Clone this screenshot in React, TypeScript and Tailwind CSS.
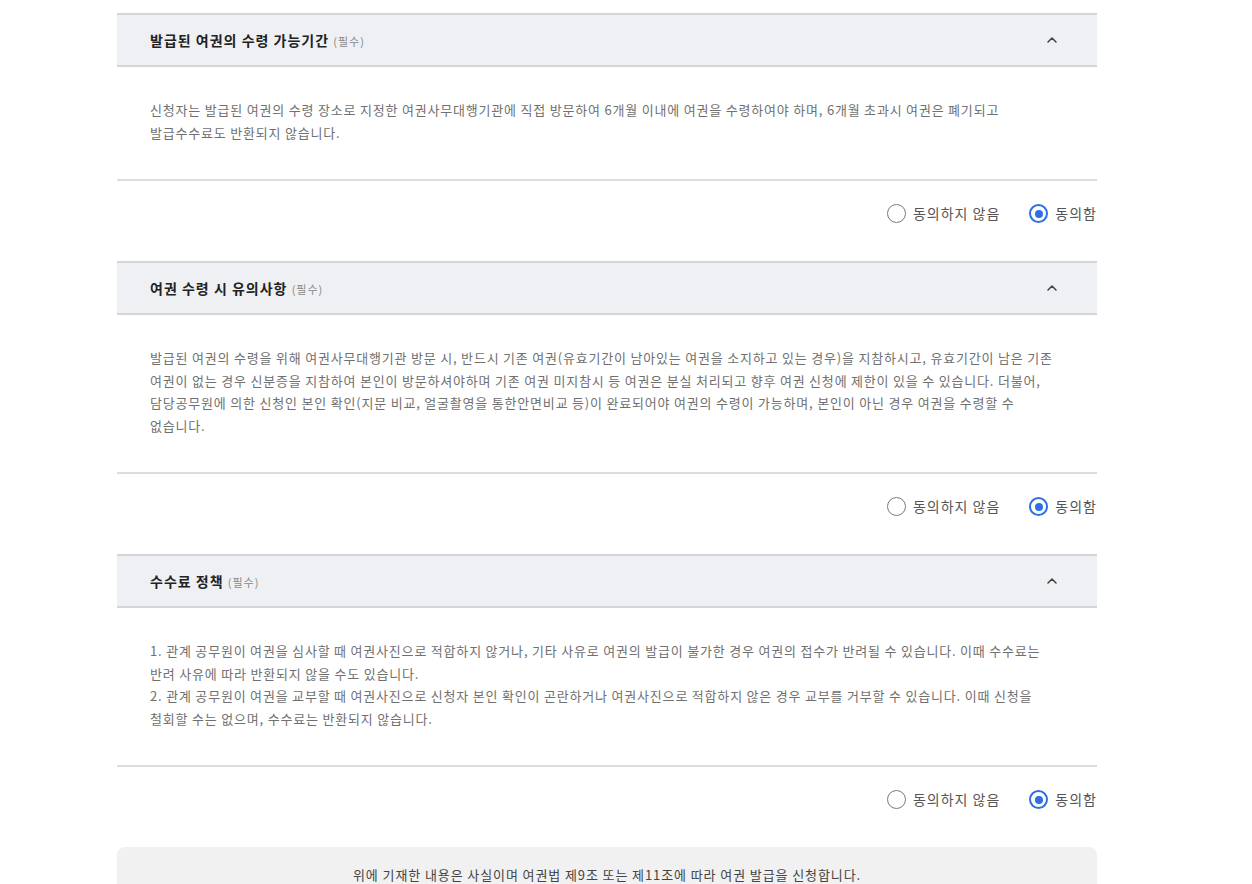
import { useState } from 'react';

const sections = [
  {
    title: '발급된 여권의 수령 가능기간',
    body: [
      '신청자는 발급된 여권의 수령 장소로 지정한 여권사무대행기관에 직접 방문하여 6개월 이내에 여권을 수령하여야 하며, 6개월 초과시 여권은 폐기되고 발급수수료도 반환되지 않습니다.',
    ],
  },
  {
    title: '여권 수령 시 유의사항',
    body: [
      '발급된 여권의 수령을 위해 여권사무대행기관 방문 시, 반드시 기존 여권(유효기간이 남아있는 여권을 소지하고 있는 경우)을 지참하시고, 유효기간이 남은 기존 여권이 없는 경우 신분증을 지참하여 본인이 방문하셔야하며 기존 여권 미지참시 등 여권은 분실 처리되고 향후 여권 신청에 제한이 있을 수 있습니다. 더불어, 담당공무원에 의한 신청인 본인 확인(지문 비교, 얼굴촬영을 통한안면비교 등)이 완료되어야 여권의 수령이 가능하며, 본인이 아닌 경우 여권을 수령할 수 없습니다.',
    ],
  },
  {
    title: '수수료 정책',
    body: [
      '1. 관계 공무원이 여권을 심사할 때 여권사진으로 적합하지 않거나, 기타 사유로 여권의 발급이 불가한 경우 여권의 접수가 반려될 수 있습니다. 이때 수수료는 반려 사유에 따라 반환되지 않을 수도 있습니다.',
      '2. 관계 공무원이 여권을 교부할 때 여권사진으로 신청자 본인 확인이 곤란하거나 여권사진으로 적합하지 않은 경우 교부를 거부할 수 있습니다. 이때 신청을 철회할 수는 없으며, 수수료는 반환되지 않습니다.',
    ],
  },
];

function Radio({ checked, label, onClick }: { checked: boolean; label: string; onClick: () => void }) {
  return (
    <button type="button" onClick={onClick} className="flex items-center gap-[7px]">
      {checked ? (
        <span className="flex h-[19px] w-[19px] items-center justify-center rounded-full border-2 border-[#2f6fe4]">
          <span className="h-[8px] w-[8px] rounded-full bg-[#2f6fe4]" />
        </span>
      ) : (
        <span className="h-[19px] w-[19px] rounded-full border-[1.5px] border-[#7a7a7a]" />
      )}
      <span className="text-[14px] tracking-[1px] text-[#555]">{label}</span>
    </button>
  );
}

function Section({ title, body }: { title: string; body: string[] }) {
  const [agree, setAgree] = useState(true);
  return (
    <div>
      <div className="flex h-[54px] items-center justify-between border-y-2 border-[#d3d5d9] bg-[#eef0f4] pl-[33px] pr-[37px]">
        <h3 className="text-[14px] font-bold tracking-[1px] text-[#222]">
          {title} <span className="text-[11px] font-normal text-[#888]">(필수)</span>
        </h3>
        <svg width="16" height="16" viewBox="0 0 24 24" fill="none" stroke="#444" strokeWidth="2.4" strokeLinecap="round" strokeLinejoin="round">
          <path d="M6 15l6-6 6 6" />
        </svg>
      </div>
      <div className="border-b-2 border-[#dcdcdc] px-[33px] pt-[32px] pb-[35px]">
        {body.map((p, i) => (
          <p key={i} className="break-keep text-[13px] leading-[22.5px] tracking-[0.8px] text-[#707070]">
            {p}
          </p>
        ))}
      </div>
      <div className="flex h-[80px] justify-end gap-[29px] pt-[22px]">
        <div className="h-[20px]"><Radio checked={!agree} label="동의하지 않음" onClick={() => setAgree(false)} /></div>
        <div className="h-[20px]"><Radio checked={agree} label="동의함" onClick={() => setAgree(true)} /></div>
      </div>
    </div>
  );
}

export default function App() {
  return (
    <div className="min-h-screen bg-white pt-[13px] font-['Noto_Sans_CJK_KR','Noto_Sans',sans-serif]">
      <div className="mx-auto w-[980px] -translate-x-[19px]">
        {sections.map((s) => (
          <Section key={s.title} title={s.title} body={s.body} />
        ))}
        <div className="rounded-t-[8px] bg-[#f1f1f1] pt-[18px] pb-[20px] text-center text-[13px] tracking-[0.9px] text-[#444]">
          위에 기재한 내용은 사실이며 여권법 제9조 또는 제11조에 따라 여권 발급을 신청합니다.
        </div>
      </div>
    </div>
  );
}
